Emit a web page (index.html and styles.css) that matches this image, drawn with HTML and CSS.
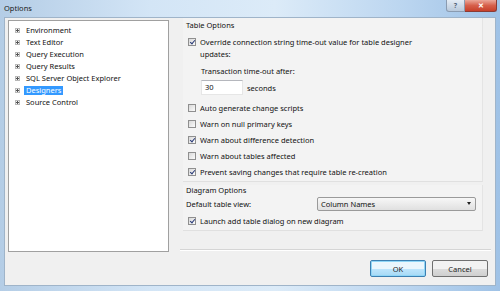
FILE: index.html
```html
<!DOCTYPE html>
<html>
    <head>
        <meta charset="utf-8">
        <title>Options</title>
        <link rel="stylesheet" href="styles.css">
    </head>
    <body>
        <div class="window">
            <div class="titlebar">
                <span class="title">Options</span>
                <div class="caption-btns">
                    <span class="cap-help">?</span>
                    <span class="cap-close">&#x2715;</span>
                </div>
            </div>
            <div class="client">
                <div class="main">
                    <div class="tree">
                        <div class="node"><span class="plus"></span><span class="label">Environment</span></div>
                        <div class="node"><span class="plus"></span><span class="label">Text Editor</span></div>
                        <div class="node"><span class="plus"></span><span class="label">Query Execution</span></div>
                        <div class="node"><span class="plus"></span><span class="label">Query Results</span></div>
                        <div class="node"><span class="plus"></span><span class="label">SQL Server Object Explorer</span></div>
                        <div class="node"><span class="plus"></span><span class="label selected">Designers</span></div>
                        <div class="node"><span class="plus"></span><span class="label">Source Control</span></div>
                    </div>
                    <div class="options">
                        <div class="group table-group">
                            <div class="group-title">Table Options</div>
                            <div class="check wrap"><span class="box checked"></span><span class="check-text">Override connection string time-out value for table designer<br>updates:</span></div>
                            <div class="timeout">
                                <div class="timeout-label">Transaction time-out after:</div>
                                <div class="timeout-row"><span class="textbox">30</span><span>seconds</span></div>
                            </div>
                            <div class="check"><span class="box"></span><span>Auto generate change scripts</span></div>
                            <div class="check"><span class="box"></span><span>Warn on null primary keys</span></div>
                            <div class="check"><span class="box checked"></span><span>Warn about difference detection</span></div>
                            <div class="check"><span class="box"></span><span>Warn about tables affected</span></div>
                            <div class="check"><span class="box checked"></span><span>Prevent saving changes that require table re-creation</span></div>
                        </div>
                        <div class="group diagram-group">
                            <div class="group-title">Diagram Options</div>
                            <div class="view-row">
                                <span>Default table view:</span>
                                <div class="combo"><span>Column Names</span><span class="arrow"></span></div>
                            </div>
                            <div class="check"><span class="box checked"></span><span>Launch add table dialog on new diagram</span></div>
                        </div>
                    </div>
                </div>
                <div class="sep"></div>
                <div class="buttons">
                    <button class="btn default">OK</button>
                    <button class="btn">Cancel</button>
                </div>
            </div>
        </div>
    </body>
</html>
```

FILE: styles.css
```css
body {
    margin: 0;
    font-family: "Noto Sans", "Open Sans", sans-serif;
    font-size: 7.5px;
    color: #111;
}
.window {
    width: 500px;
    height: 291px;
    display: flex;
    flex-direction: column;
    background: linear-gradient(to right, #b4cde6, #d3e5f6 30%, #dcebf8 55%, #bcd6f0 80%, #9fc2e6);
}
.titlebar {
    height: 17px;
    display: flex;
    justify-content: space-between;
    align-items: flex-start;
    padding-left: 4px;
}
.title {
    margin-top: 3px;
    font-size: 7.5px;
    color: #1a1a1a;
}
.caption-btns {
    display: flex;
    margin-right: 3px;
}
.cap-help {
    width: 17px;
    height: 11px;
    border: 1px solid #8a9bb0;
    border-top: none;
    border-radius: 0 0 0 3px;
    background: linear-gradient(#e4ecf5, #b9c9db);
    color: #55657a;
    font-size: 7px;
    font-weight: bold;
    text-align: center;
    line-height: 11px;
}
.cap-close {
    width: 31px;
    height: 11px;
    border: 1px solid #8b3a33;
    border-top: none;
    border-left: none;
    border-radius: 0 0 3px 0;
    background: linear-gradient(#eba799, #d65f4a 50%, #c7402a);
    color: #fff;
    font-size: 7px;
    font-weight: bold;
    text-align: center;
    line-height: 11px;
}
.client {
    height: 267px;
    margin: 0 4px 0 4px;
    background: #f0f0f0;
    border: 1px solid #9fb4c9;
    display: flex;
    flex-direction: column;
}
.main {
    display: flex;
    height: 229px;
    padding: 2px 0 0 3px;
}
.tree {
    width: 159px;
    height: 227px;
    background: #fff;
    border: 1px solid #a0a0a0;
    padding-top: 3px;
    box-sizing: content-box;
}
.node {
    height: 12px;
    display: flex;
    align-items: center;
    padding-left: 6px;
}
.plus {
    width: 3px;
    height: 3px;
    border: 1px solid #b8b8b8;
    margin-right: 4px;
    position: relative;
    background: #f4f4f4;
}
.plus::before {
    content: "";
    position: absolute;
    left: 0;
    top: 1px;
    width: 3px;
    height: 1px;
    background: #555;
}
.plus::after {
    content: "";
    position: absolute;
    left: 1px;
    top: 0;
    width: 1px;
    height: 3px;
    background: #555;
}
.label {
    padding: 0 2px;
    line-height: 9px;
    white-space: nowrap;
}
.label.selected {
    background: #3399ff;
    color: #fff;
}
.options {
    width: 300px;
    margin-left: 14px;
    margin-top: -2px;
    display: flex;
    flex-direction: column;
}
.group {
    background: #f3f3f3;
    border-right: 1px solid #e4e4e4;
    border-bottom: 1px solid #e0e0e0;
    padding-left: 3px;
}
.table-group {
    height: 162px;
    padding-top: 1px;
}
.group-title {
    height: 12px;
    line-height: 12px;
}
.check {
    display: flex;
    align-items: center;
    height: 16px;
    line-height: 12px;
    padding-left: 2px;
    white-space: nowrap;
}
.table-group .check.wrap {
    height: 24px;
    margin-top: 5px;
    align-items: flex-start;
}
.check.wrap .box {
    margin-top: 2px;
}
.box {
    width: 6px;
    height: 6px;
    border: 1px solid #8f8f8f;
    background: linear-gradient(135deg, #d8d8d8, #fbfbfb);
    margin-right: 4px;
    flex-shrink: 0;
    position: relative;
}
.box.checked::after {
    content: "";
    position: absolute;
    left: 2px;
    top: 0;
    width: 2px;
    height: 4px;
    border: solid #2a3b78;
    border-width: 0 1px 1px 0;
    transform: rotate(40deg);
}
.timeout {
    padding-left: 15px;
    height: 35px;
}
.timeout-label {
    height: 12px;
    line-height: 12px;
    margin-top: 5px;
}
.timeout-row {
    display: flex;
    align-items: center;
    margin-top: 3px;
}
.textbox {
    width: 37px;
    height: 13px;
    line-height: 13px;
    background: #fff;
    border: 1px solid #e6e6e6;
    border-top-color: #b5b7bd;
    padding-left: 3px;
    margin-right: 4px;
}
.diagram-group {
    margin-top: 3px;
    height: 45px;
}
.diagram-group .group-title {
    height: 9px;
    line-height: 9px;
    margin-top: 1px;
}
.view-row {
    display: flex;
    justify-content: space-between;
    align-items: center;
    height: 15px;
    margin-top: 1px;
}
.combo {
    width: 150px;
    height: 12px;
    border: 1px solid #9a9a9a;
    border-radius: 2px;
    background: linear-gradient(#f7f7f7, #e0e0e0);
    display: flex;
    justify-content: space-between;
    align-items: center;
    padding: 0 4px 0 3px;
    margin-right: 6px;
}
.arrow {
    width: 0;
    height: 0;
    border-left: 2px solid transparent;
    border-right: 2px solid transparent;
    border-top: 3px solid #222;
}
.diagram-group .check {
    margin-top: 2px;
}
.sep {
    height: 1px;
    background: #d5d5d5;
    border-bottom: 1px solid #fff;
    margin: 0 4px 0 175px;
}
.buttons {
    display: flex;
    justify-content: flex-end;
    gap: 6px;
    padding: 9px 7px 0 0;
}
.btn {
    width: 56px;
    height: 17px;
    font-family: inherit;
    font-size: 7.5px;
    color: #1e1e1e;
    border: 1px solid #707070;
    border-radius: 2px;
    background: linear-gradient(#f2f2f2 50%, #dddddd 50%, #cfcfcf);
    padding: 0;
}
.btn.default {
    border-color: #3c7fb1;
    background: linear-gradient(#eaf6fd 50%, #bee6fd 50%, #a7d9f5);
    box-shadow: inset 0 0 0 1px #8fd6f7;
}
```
